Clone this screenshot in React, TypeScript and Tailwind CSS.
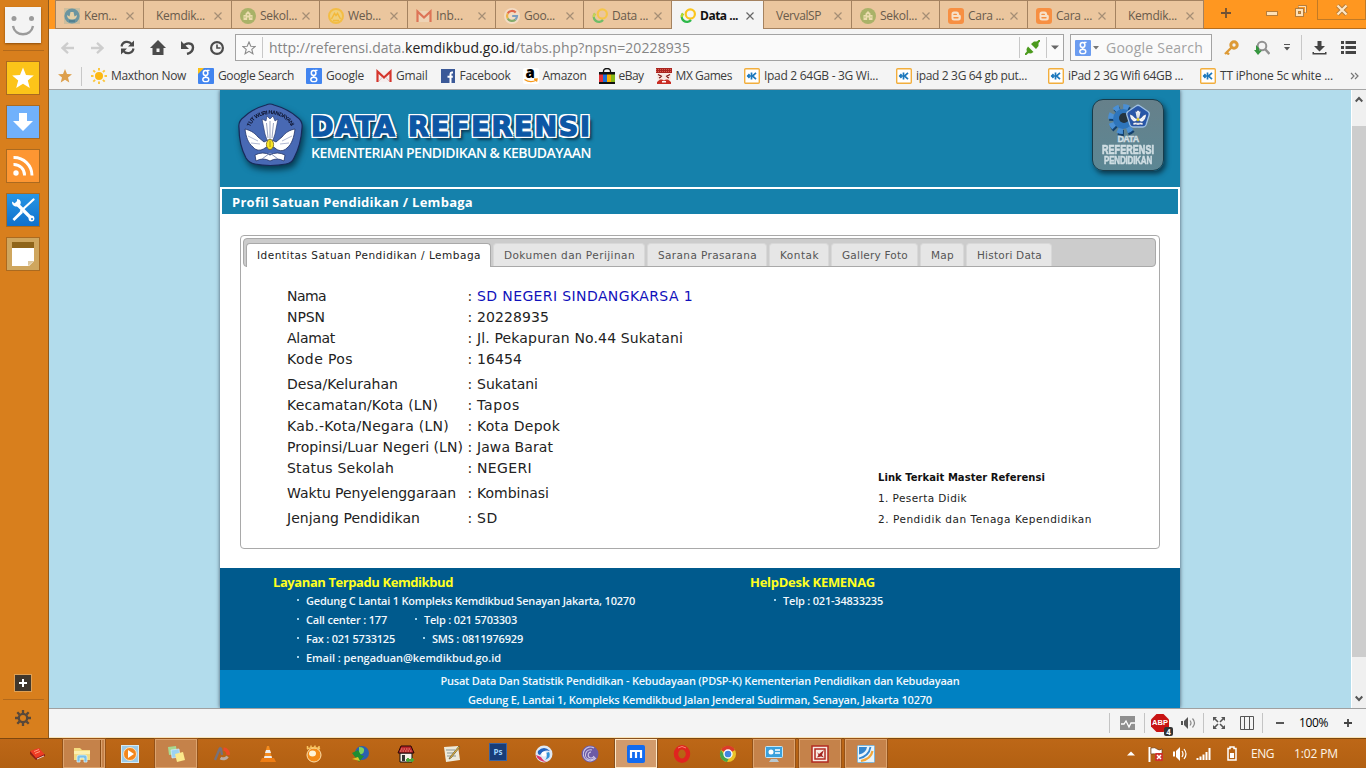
import React, { useLayoutEffect, useRef } from "react";

const UI = "font-['Open_Sans','Noto_Sans',sans-serif]";
const VERDANA = "font-['DejaVu_Sans',sans-serif]";

/* Single-line label whose letter spacing is adjusted so it spans w pixels. */
function Fit({ w, className = "", children }: { w: number; className?: string; children: string }) {
  const ref = useRef<HTMLSpanElement>(null);
  useLayoutEffect(() => {
    const el = ref.current;
    if (!el) return;
    el.style.letterSpacing = "0px";
    const natural = el.getBoundingClientRect().width;
    el.style.letterSpacing = `${(w - natural) / children.length}px`;
  }, [w, children]);
  return (
    <span ref={ref} className={`inline-block shrink-0 whitespace-pre ${className}`}>
      {children}
    </span>
  );
}

/* ---------- small icons ---------- */
const S = "block shrink-0";

const CrestTiny = () => (
  <svg className={S} width="16" height="16" viewBox="0 0 16 16">
    <rect width="16" height="16" fill="#cdbd9c" />
    <circle cx="8" cy="8" r="7.6" fill="#6b95a0" />
    <path d="M3 7c0 3 2 4.500 5 4.500S13 10 13 7l-2.500 1.500L9.500 4h-3l-1 4.500z" fill="#e5cfa5" />
    <path d="M5 13h6" stroke="#3f6f80" />
  </svg>
);
const School = () => (
  <svg className={S} width="16" height="16" viewBox="0 0 16 16">
    <circle cx="8" cy="8" r="8" fill="#a9b268" />
    <path d="M8 3L5.500 5.500v1.500h-2V12h9V7h-2V5.500z" fill="#ecdcae" />
    <path d="M7.200 9.500h1.600V12H7.200zM4.500 8.500h1v1.200h-1zM10.500 8.500h1v1.200h-1zM7.300 6h1.400v1.400H7.300z" fill="#a9b268" />
  </svg>
);
const WebYellow = () => (
  <svg className={S} width="16" height="16" viewBox="0 0 16 16">
    <circle cx="8" cy="8" r="7" fill="#f0cf7c" stroke="#f3bd45" strokeWidth="2" />
    <path d="M3.500 11l3-5.500L8 7.500l1.500-2 3 5.500M5 12.500h6" stroke="#f3b93a" strokeWidth="1.500" fill="none" />
  </svg>
);
const Gmail = ({ pale = false }: { pale?: boolean }) => (
  <svg className={S} width="16" height="16" viewBox="0 0 16 16">
    <path d="M1 3h14v11H1z" fill={pale ? "#eed3b5" : "#f4eeee"} />
    <path d="M1.500 14V3.500L8 9.500l6.500-6V14" fill="none" stroke={pale ? "#dd7457" : "#d5352c"} strokeWidth="2.200" />
    {!pale && <path d="M3 13l3.500-4M13 13L9.500 9" stroke="#d9a8a6" strokeWidth=".7" />}
  </svg>
);
const GoogleG = () => (
  <svg className={S} width="16" height="16" viewBox="0 0 16 16">
    <circle cx="8" cy="8" r="8" fill="#f2dcc4" />
    <g fill="none" strokeWidth="2.200">
      <path d="M11.700 4.500A5 5 0 0 0 3.700 5.500" stroke="#e2674a" />
      <path d="M3.700 5.500a5 5 0 0 0 0 5" stroke="#edb447" />
      <path d="M3.700 10.500a5 5 0 0 0 7.700 1.100" stroke="#84ab6a" />
      <path d="M11.400 11.600A5 5 0 0 0 13 8H8.200" stroke="#7c9fc0" />
    </g>
  </svg>
);
const Rings = ({ pale = false }: { pale?: boolean }) => (
  <svg className={S} width="16" height="16" viewBox="0 0 16 16" opacity={pale ? 0.65 : 1}>
    <circle cx="10.300" cy="6" r="4.600" fill="none" stroke="#fbc51d" strokeWidth="2.200" />
    <path d="M3 5.500a5 5 0 1 0 8 6.500" fill="none" stroke="#2eb94a" strokeWidth="2.400" />
    <path d="M3 5.500a4 4 0 0 0-1 3.500" fill="none" stroke="#b6d92c" strokeWidth="2.400" />
  </svg>
);
const Blogger = () => (
  <svg className={S} width="16" height="16" viewBox="0 0 16 16">
    <rect width="16" height="16" rx="3" fill="#f78f42" />
    <path d="M6 3.500h2.500a2.500 2.500 0 0 1 2.500 2.500c0 1.300 1.800.7 1.800 2v2a2.500 2.500 0 0 1-2.500 2.500H6A2.500 2.500 0 0 1 3.500 10V6A2.500 2.500 0 0 1 6 3.500z" fill="#f7e0c8" />
    <path d="M6 6.400h2.300M6 9.700h4" stroke="#f78f42" strokeWidth="1.400" strokeLinecap="round" />
  </svg>
);
const Google8 = ({ corner = false, pale = false }: { corner?: boolean; pale?: boolean }) => (
  <svg className={S} width="16" height="16" viewBox="0 0 16 16">
    <rect width="16" height="16" rx="1" fill={pale ? "#6b9cf0" : "#4285f0"} />
    {corner && <path d="M0 0h6L0 6z" fill="#fbc116" />}
    <g fill="none" stroke="#fff">
      <ellipse cx="7.600" cy="4.900" rx="2.300" ry="2.500" strokeWidth="1.500" />
      <path d="M9 2.300h2.500M8.300 7.300q-1.700 1 .2 1.900" strokeWidth="1.200" />
      <ellipse cx="7.800" cy="11.400" rx="3" ry="2.200" strokeWidth="1.400" />
    </g>
  </svg>
);
const Sun = () => (
  <svg className={S} width="16" height="16" viewBox="0 0 16 16">
    <circle cx="8" cy="8" r="4" fill="#fcb813" />
    <g stroke="#fcc63a" strokeWidth="1.900">
      <path d="M8 0v2.500M8 13.500V16M0 8h2.500M13.500 8H16M2.300 2.300l1.800 1.800M11.900 11.900l1.800 1.800M2.300 13.700l1.800-1.800M11.900 4.100l1.800-1.800" />
    </g>
  </svg>
);
const Facebook = () => (
  <svg className={S} width="16" height="16" viewBox="0 0 16 16">
    <path d="M1 1h14v14H1z" fill="#3b5998" />
    <path d="M13 4.500h-1.200c-1 0-1.300.5-1.300 1.500v9M7.500 8.800h5.300" stroke="#fff" strokeWidth="2" fill="none" />
  </svg>
);
const Amazon = () => (
  <span className="relative block h-4 w-4 shrink-0 rounded-[2px] bg-white">
    <span className="absolute left-[3px] top-[-3px] font-['Open_Sans',sans-serif] text-[15px] font-extrabold leading-[15px] text-black">a</span>
    <svg className="absolute inset-0" width="16" height="16"><path d="M1.500 11.500q6 4 12 .5M11 11.300l3-.3-.5 2.700" stroke="#f79a1c" strokeWidth="1.400" fill="none" /></svg>
  </span>
);
const Ebay = () => (
  <svg className={S} width="16" height="16" viewBox="0 0 16 16">
    <path d="M0 4h16v12H0z" fill="#111" />
    <path d="M4.500 5V3.500a3.500 3 0 0 1 7 0V5" stroke="#111" strokeWidth="1.300" fill="none" />
    <path d="M0 6.500h4V14H0z" fill="#e53238" /><path d="M4 6.500h4V14H4z" fill="#1a6ed8" />
    <path d="M8 6.500h4V14H8z" fill="#f5af02" /><path d="M12 6.500h4V14h-4z" fill="#86b817" />
  </svg>
);
const MxGames = () => (
  <svg className={S} width="16" height="16" viewBox="0 0 16 16">
    <path d="M0 0h16v5H0z" fill="#a92520" />
    <path d="M0 1.500h16M0 3.500h16" stroke="#d95d50" strokeDasharray="1 1" />
    <path d="M1 5h14v6l-3 4H4l-3-4z" fill="#f8e8e2" />
    <path d="M2 6.500l4 2M14 6.500l-4 2M3 10l2-1M13 10l-2-1" stroke="#7c1512" strokeWidth="1.300" />
    <path d="M1 16v-2l3-2.500h2l2 1 2-1h2l3 2.500v2z" fill="#c92d24" /><path d="M6 13h4v1.500H6z" fill="#fff" />
  </svg>
);
const Kaskus = () => (
  <svg className={S} width="16" height="16" viewBox="0 0 16 16">
    <rect x=".7" y=".7" width="14.600" height="14.600" rx="1" fill="#fff" stroke="#f2ae3d" strokeWidth="1.400" />
    <path d="M3 8h5M7.500 4.500v7M12 4.800L8.500 8l3.500 3.200M5.500 6.200L3.800 8l1.700 1.800" stroke="#1c78bd" strokeWidth="1.700" fill="none" />
  </svg>
);
const Close = ({ dark = false }: { dark?: boolean }) => (
  <svg className={S} width="8" height="8" viewBox="0 0 8 8">
    <path d="M.5.5l7 7M7.500.5l-7 7" stroke={dark ? "#666" : "#a58e75"} strokeWidth="1.200" />
  </svg>
);

/* ---------- side bar ---------- */
function Side({ className, children }: { className: string; children: React.ReactNode }) {
  return (
    <div className={`mb-[10px] flex h-[34px] w-[34px] shrink-0 items-center justify-center border border-[#aa6a20] ${className}`}>
      {children}
    </div>
  );
}
function Sidebar() {
  return (
    <aside className="flex w-[49px] shrink-0 flex-col items-center border-r border-[#8f5a1d] bg-[#d87f1d] pr-[2px]">
      <div className="mt-[7px] flex h-9 w-9 shrink-0 items-center justify-center bg-[#f4f4f4] shadow-[0_1px_2px_#8a4b0a]">
        <svg width="36" height="36" viewBox="0 0 36 36">
          <circle cx="9" cy="11.500" r="2.500" fill="#9b9b9b" /><circle cx="26.500" cy="11.500" r="2.500" fill="#9b9b9b" />
          <path d="M8 19c2 11 18 11 20 0" fill="none" stroke="#9b9b9b" strokeWidth="2.400" />
        </svg>
      </div>
      <div className="mb-[10px] mt-[7px] h-px w-[41px] shrink-0 bg-[#b3691a]" />
      <Side className="bg-[#fcc419]">
        <svg width="24" height="22" viewBox="0 0 24 22"><path d="M12 .5l3 7.400 7.800.5-6 5 2 7.600L12 16.800 5.200 21l2-7.600-6-5 7.800-.5z" fill="#fff" /></svg>
      </Side>
      <Side className="bg-[#71b1fb]">
        <svg width="20" height="18" viewBox="0 0 20 18"><path d="M6 0h8v8h6L10 18 0 8h6z" fill="#fff" /></svg>
      </Side>
      <Side className="bg-[#fd9632]">
        <svg width="21" height="20" viewBox="0 0 21 20">
          <circle cx="3" cy="17" r="2.700" fill="#fff" /><path d="M.5 8.500A10.500 10.500 0 0 1 11.500 19.500M.5 1.500A18 18 0 0 1 19 19.500" stroke="#fff" strokeWidth="2.900" fill="none" />
        </svg>
      </Side>
      <Side className="bg-gradient-to-b from-[#2796e6] to-[#0f70cb]">
        <svg width="24" height="24" viewBox="0 0 24 24">
          <path d="M22.500 1.500L10 13" stroke="#fff" strokeWidth="2.200" strokeLinecap="round" />
          <path d="M10 12.500l-8.500 8.500 1.800 2 8.700-8.300z" fill="#fff" />
          <path d="M4.500 4.500l15 15" stroke="#fff" strokeWidth="3.200" />
          <path d="M1 3.500l3 2 2-1.500V1c3 0 5 3 3 6-2 2-5 2-7 0-1-1-1-2.500-1-3.500z" fill="#fff" />
          <circle cx="20.500" cy="20.500" r="2.900" fill="#fff" /><circle cx="21" cy="21" r="1" fill="#187bd2" />
        </svg>
      </Side>
      <Side className="bg-[#cfa65e]">
        <svg width="22" height="24" viewBox="0 0 22 24"><path d="M0 6h22v13l-5 5H0z" fill="#fff" /><path d="M0 0h22v6H0z" fill="#8f651b" /><path d="M16 24v-5h6z" fill="#dcc79e" /></svg>
      </Side>
      <div className="grow" />
      <svg className={S} width="18" height="18" viewBox="0 0 18 18">
        <rect x=".5" y=".5" width="17" height="17" fill="#40372c" stroke="#dea055" /><path d="M5 9h8M9 5v8" stroke="#fff" strokeWidth="2" />
      </svg>
      <div className="mb-[9px] mt-[7px] h-px w-[41px] shrink-0 bg-[#b3691a]" />
      <svg className={`${S} mb-[11px]`} width="18" height="18" viewBox="0 0 18 18">
        <g stroke="#58483a" strokeWidth="2.300"><path d="M9 1v3M9 14v3M1 9h3M14 9h3M3.300 3.300l2.100 2.100M12.600 12.600l2.100 2.100M3.300 14.700l2.100-2.100M12.600 5.400l2.100-2.100" /></g>
        <circle cx="9" cy="9" r="4.200" fill="none" stroke="#58483a" strokeWidth="2.300" />
      </svg>
    </aside>
  );
}

/* ---------- tabs ---------- */
type TabInfo = { t: string; w: number; icon?: React.ReactNode; active?: boolean };
const tabs: TabInfo[] = [
  { t: "Kem...", w: 33, icon: <CrestTiny /> },
  { t: "Kemdik...", w: 49 },
  { t: "Sekol...", w: 37, icon: <School /> },
  { t: "Web...", w: 33, icon: <WebYellow /> },
  { t: "Inb...", w: 27, icon: <Gmail pale /> },
  { t: "Goo...", w: 31, icon: <GoogleG /> },
  { t: "Data ...", w: 36, icon: <Rings pale /> },
  { t: "Data ...", w: 38, icon: <Rings />, active: true },
  { t: "VervalSP", w: 45 },
  { t: "Sekol...", w: 37, icon: <School /> },
  { t: "Cara ...", w: 36, icon: <Blogger /> },
  { t: "Cara ...", w: 36, icon: <Blogger /> },
  { t: "Kemdik...", w: 49 },
];
function TabStrip() {
  return (
    <div className="flex h-[29px] shrink-0 bg-[#ff9720] pl-[6px]">
      {tabs.map((t, i) => (
        <div
          key={i}
          className={`flex h-[29px] shrink-0 items-center border-l border-t border-l-[#a48260] border-t-[#a48260] pb-px pr-[9px] pt-[3px] text-[12px] ${
            t.active ? "w-[92px] bg-[#f4f4f4] font-bold text-[#111]" : "w-[88px] border-b border-b-[#a48260] bg-[#ebc69e] text-[#695b4c]"
          } ${t.icon ? "gap-1 pl-2" : "pl-3"}`}
        >
          {t.icon}
          <Fit w={t.w}>{t.t}</Fit>
          <span className="ml-auto"><Close dark={t.active} /></span>
        </div>
      ))}
      <div className="flex grow items-start border-b border-l border-b-[#b56c1b] border-l-[#a48260]">
        <svg className={`${S} ml-[16px] mt-[7px]`} width="12" height="12"><path d="M6 1v10M1 6h10" stroke="#705235" strokeWidth="1.800" /></svg>
        <svg className={`${S} ml-[34px] mt-[11px]`} width="12" height="5"><rect x=".5" y=".5" width="11" height="4" fill="#ffe1b6" stroke="#b57d3c" /></svg>
        <svg className={`${S} ml-[17px] mt-[5px]`} width="12" height="12" viewBox="0 0 12 12">
          <path d="M3.500 3V.5h8v7H9" fill="none" stroke="#b57d3c" /><path d="M3.500 1.500h7v6" fill="none" stroke="#ffe1b6" />
          <rect x=".5" y="3.500" width="8" height="8" fill="#ffe1b6" stroke="#b57d3c" /><rect x="3.500" y="6.500" width="2" height="2" fill="#ff9720" stroke="#b57d3c" />
        </svg>
        <div className="ml-[10px] flex h-5 w-[49px] items-center justify-center border border-t-0 border-[#c27a25]">
          <svg width="12" height="12"><path d="M1.500 1.500l9 9M10.500 1.500l-9 9" stroke="#b57d3c" strokeWidth="4" /><path d="M1.500 1.500l9 9M10.500 1.500l-9 9" stroke="#ffe6c2" strokeWidth="2.200" /></svg>
        </div>
      </div>
    </div>
  );
}

/* ---------- toolbar ---------- */
const Caret = ({ className = "" }: { className?: string }) => (
  <svg className={`${S} ${className}`} width="8" height="5"><path d="M0 .5h8L4 4.500z" fill="#666" /></svg>
);
function Toolbar() {
  return (
    <div className="flex h-[34px] shrink-0 items-center bg-[#f4f4f4] pt-[3px]">
      <div className="flex h-[26px] w-[186px] shrink-0 items-center pl-[12px]">
        <svg className={S} width="13" height="12" viewBox="0 0 13 12"><path d="M7 .8L1.500 6 7 11.200M1.500 6H13" stroke="#cdcdcd" strokeWidth="2.300" fill="none" /></svg>
        <svg className={`${S} ml-[17px]`} width="13" height="12" viewBox="0 0 13 12"><path d="M6 .8L11.500 6 6 11.200M11.500 6H0" stroke="#cdcdcd" strokeWidth="2.300" fill="none" /></svg>
        <svg className={`${S} ml-[16px]`} width="15" height="15" viewBox="0 0 15 15"><path d="M1.500 6.500C2.500 1 9 .5 12 4.500M13.500 8.500C12.500 14 6 14.500 3 10.500" stroke="#4b4b4b" strokeWidth="2.200" fill="none" /><path d="M14 .5v6H8zM1 14.500v-6h6z" fill="#4b4b4b" /></svg>
        <svg className={`${S} ml-[15px]`} width="16" height="15" viewBox="0 0 16 15"><path d="M8 0l8 8h-2.500v7h-11V8H0zM6.500 8.500V12h3V8.500z" fill="#4b4b4b" fillRule="evenodd" /></svg>
        <svg className={`${S} ml-[14px]`} width="15" height="14" viewBox="0 0 15 14"><path d="M3 5.500C6 1 13 1.500 13 6.500c0 3.500-2.500 5.500-6 6.500" stroke="#4b4b4b" strokeWidth="2.400" fill="none" /><path d="M1 0v8h8z" fill="#4b4b4b" /></svg>
        <svg className={`${S} ml-[15px]`} width="14" height="14" viewBox="0 0 14 14"><circle cx="7" cy="7" r="5.900" stroke="#4b4b4b" strokeWidth="2.200" fill="none" /><path d="M7 3.500V7h3.500" stroke="#4b4b4b" strokeWidth="1.600" fill="none" /></svg>
      </div>
      <div className="flex h-[27px] w-[829px] shrink-0 items-center border border-[#a3a3a3] bg-[#fafafa]">
        <svg className={`${S} ml-[6px]`} width="14" height="14" viewBox="0 0 14 14"><path d="M7 1l1.800 4.200 4.400.3-3.400 2.900 1.100 4.300L7 10.300l-3.900 2.400 1.100-4.300L.8 5.500l4.400-.3z" stroke="#8a8a8a" strokeWidth="1.100" fill="none" /></svg>
        <div className="ml-[6px] h-[21px] w-px bg-[#c8c8c8]" />
        <div className="flex grow pl-[6px] text-[14px] text-[#858585]">
          <Fit w={136}>http://referensi.data.</Fit>
          <Fit w={110} className="text-[#222]">kemdikbud.go.id</Fit>
          <Fit w={175}>/tabs.php?npsn=20228935</Fit>
        </div>
        <div className="h-[21px] w-px bg-[#c8c8c8]" />
        <svg className={`${S} ml-[5px]`} width="15" height="15" viewBox="0 0 15 15"><path d="M0 15l4-4M11 4l4-4" stroke="#4b9a1d" strokeWidth="2" /><path d="M3 6.500l5.500 5.500-2.500 1.500L2 13 1.500 9zM6 4l3-2.500h3.500L13.500 3v3L11 9z" fill="#4b9a1d" /></svg>
        <div className="ml-[6px] h-[21px] w-px bg-[#c8c8c8]" />
        <Caret className="ml-[4px] mr-[4px]" />
      </div>
      <div className="ml-[6px] flex h-[27px] w-[142px] shrink-0 items-center border border-[#a3a3a3] bg-[#fafafa] pl-[4px]">
        <Google8 pale />
        <svg className={`${S} ml-[2px]`} width="6" height="4"><path d="M0 0h6L3 3.500z" fill="#777" /></svg>
        <Fit w={97} className="ml-[7px] text-[14px] text-[#a2a2a2]">Google Search</Fit>
      </div>
      <svg className={`${S} ml-[12px]`} width="15" height="15" viewBox="0 0 15 15"><circle cx="10" cy="5" r="3.200" stroke="#dd9a36" strokeWidth="3" fill="none" /><path d="M7.500 7.500L1 14M2 11.500l3 3" stroke="#dd9a36" strokeWidth="2.400" /></svg>
      <svg className={`${S} ml-[15px]`} width="16" height="16" viewBox="0 0 16 16"><circle cx="8" cy="6" r="4.300" stroke="#929292" strokeWidth="2" fill="none" /><path d="M11 9l4.500 5" stroke="#929292" strokeWidth="2.500" /><path d="M2 5v5H0l4 5 4-4.500H5V8" fill="#36963f" /></svg>
      <svg className={`${S} ml-[13px]`} width="8" height="7"><path d="M1 .5h6" stroke="#555" /><path d="M1 3h6L4 6.500z" fill="#555" /></svg>
      <div className="ml-[10px] h-[25px] w-px bg-[#c8c8c8]" />
      <svg className={`${S} ml-[10px]`} width="15" height="14" viewBox="0 0 15 14"><path d="M5.500 0h4v5h3.500L7.500 10.500 2 5h3.500zM.5 11v2.500h14V11h-1.500v1h-11v-1z" fill="#444" /></svg>
      <svg className={`${S} ml-[14px]`} width="15" height="13" viewBox="0 0 15 13"><path d="M0 1.500h3M4.500 1.500H15M0 6.500h3M4.500 6.500H15M0 11.500h3M4.500 11.500H15" stroke="#444" strokeWidth="3" /></svg>
    </div>
  );
}

const marks = [
  { t: "Maxthon Now", w: 75, icon: <Sun /> },
  { t: "Google Search", w: 76, icon: <Google8 corner /> },
  { t: "Google", w: 38, icon: <Google8 /> },
  { t: "Gmail", w: 31.5, icon: <Gmail /> },
  { t: "Facebook", w: 51, icon: <Facebook /> },
  { t: "Amazon", w: 44, icon: <Amazon /> },
  { t: "eBay", w: 25, icon: <Ebay /> },
  { t: "MX Games", w: 56.5, icon: <MxGames /> },
];
const adMarks = [
  { t: "Ipad 2 64GB - 3G Wi...", w: 114 },
  { t: "ipad 2 3G 64 gb put...", w: 111 },
  { t: "iPad 2 3G Wifi 64GB ...", w: 115 },
  { t: "TT iPhone 5c white ...", w: 113 },
];
function Bookmarks() {
  return (
    <div className="flex h-[27px] shrink-0 items-center border-b border-[#a5a5a5] bg-[#f4f4f4] pl-[9px] text-[12px] text-[#3c3c3c]">
      <svg className={S} width="14" height="14" viewBox="0 0 14 14"><path d="M7 0l2 5 5 .3-4 3.300 1.300 5L7 10.800 2.700 13.600l1.300-5-4-3.300L5 5z" fill="#dd9f4b" /></svg>
      <div className="ml-[9px] mr-[9px] h-[19px] w-px bg-[#c8c8c8]" />
      <div className="flex gap-3">
        {marks.map((m) => (
          <div key={m.t} className="flex shrink-0 items-center gap-1">{m.icon}<Fit w={m.w}>{m.t}</Fit></div>
        ))}
        {adMarks.map((m) => (
          <div key={m.t} className="flex w-[140px] shrink-0 items-center gap-1"><Kaskus /><Fit w={m.w}>{m.t}</Fit></div>
        ))}
      </div>
      <svg className={`${S} ml-[10px]`} width="9" height="8"><path d="M1 1l3 3-3 3M5 1l3 3-3 3" stroke="#777" strokeWidth="1.200" fill="none" /></svg>
    </div>
  );
}

/* ---------- web page ---------- */
function Wings() {
  return (
    <g>
      <path d="M7 26c4 1 9 3 13 8l6 5 6-3 6 3 6-5c4-5 8-7 13-8-1 8-3 15-8 19-4 4-9 3-12 0l-5-3-5 3c-4 3-9 3-12-1-5-4-7-10-8-18z" fill="#fff" stroke="#223468" strokeWidth=".8" />
      <path d="M10 33l10 5M13 40l9 1M54 33l-10 5M51 40l-9 1" stroke="#9ca6c6" strokeWidth=".8" />
      <path d="M27 31L24 16l4 2 1-5 3 3 3-3 2 5 3-2-3 15-2 6h-6z" fill="#fff" stroke="#223468" strokeWidth=".6" />
      <path d="M32 18v20M28.500 20l1.500 15M35.500 20L34 35" stroke="#8e9ab8" strokeWidth=".9" />
      <ellipse cx="32" cy="41.500" rx="3.600" ry="5" fill="#f7e426" stroke="#72631a" strokeWidth=".8" />
      <path d="M32 38v6" stroke="#a18b13" strokeWidth=".9" />
      <path d="M17 52q8-4 15 0 7-4 15 0l-1 6q-7-4-14 0-7-4-14 0z" fill="#fff" stroke="#223468" strokeWidth=".8" />
      <path d="M24 56l8-6 8 6" fill="none" stroke="#8894b8" />
    </g>
  );
}
function Crest() {
  return (
    <svg className={`${S} overflow-visible drop-shadow-[2px_4px_3px_#06394f]`} width="66" height="66" viewBox="0 0 66 66">
      <path d="M28 2Q32 0 36 2Q50 6 59 14Q65 18 64 25Q63 42 56 55Q54 60 48 61Q32 64 17 61Q11 60 8 55Q1 42 1 25Q0 18 6 14Q14 6 28 2z" fill="#4869b4" stroke="#182a59" strokeWidth="1.200" />
      <path id="crest-arc" d="M12 24Q17 12 32 11Q48 12 54 25" fill="none" />
      <text className="fill-[#0b1029] font-['Liberation_Sans',sans-serif] text-[5.500px] font-bold"><textPath href="#crest-arc" textLength="51">TUT WURI HANDAYANI</textPath></text>
      <Wings />
    </svg>
  );
}
function Badge() {
  return (
    <div className="mt-[9px] flex h-[72px] w-[72px] flex-col items-center rounded-[11px] border border-[#173c4b] bg-gradient-to-b from-[#66808a] to-[#5c8794] pt-[3px] font-['Liberation_Sans_Narrow','Liberation_Sans',sans-serif] font-bold text-[#d0dee3] shadow-[2px_3px_5px_#0b3b50]">
      <svg className={`${S} overflow-visible`} width="48" height="32" viewBox="0 0 48 32">
        <circle cx="19" cy="16" r="12" fill="none" stroke="#123f6c" strokeWidth="6" strokeDasharray="5.400 4" transform="translate(1 2)" />
        <circle cx="19" cy="16" r="12" fill="none" stroke="#4a8fd4" strokeWidth="6" strokeDasharray="5.400 4" />
        <circle cx="19" cy="16" r="10" fill="#2e75bc" />
        <circle cx="20" cy="15" r="5" fill="#24343f" />
        <path d="M32 3q2-1.500 4 0l8 5.500q2 1.500 1 4l-3 9.500q-1 2-3 2H29q-2 0-3-2l-3-9.500q-1-2.500 1-4z" fill="#2856a8" stroke="#9fc0e2" strokeWidth="1.300" />
        <svg x="23.500" y="3" width="21" height="21" viewBox="0 0 64 64"><Wings /></svg>
      </svg>
      <Fit w={21} className="-mt-[1px] [-webkit-text-stroke:0.4px_#d0dee3] text-[9px] leading-[10px]">DATA</Fit>
      <Fit w={52} className="scale-y-[1.4] [-webkit-text-stroke:0.500px_#d0dee3] text-[9px] leading-[12px]">REFERENSI</Fit>
      <Fit w={48} className="scale-y-125 [-webkit-text-stroke:0.400px_#d0dee3] text-[8px] leading-[10px]">PENDIDIKAN</Fit>
    </div>
  );
}

const pageTabs = [
  { t: "Identitas Satuan Pendidikan / Lembaga", w: 224, active: true },
  { t: "Dokumen dan Perijinan", w: 131 },
  { t: "Sarana Prasarana", w: 99 },
  { t: "Kontak", w: 39 },
  { t: "Gallery Foto", w: 66 },
  { t: "Map", w: 23 },
  { t: "Histori Data", w: 65 },
];
const rows = [
  { k: "Nama", kw: 39, v: "SD NEGERI SINDANGKARSA 1", vw: 216, link: true },
  { k: "NPSN", kw: 38, v: "20228935", vw: 72 },
  { k: "Alamat", kw: 48, v: "Jl. Pekapuran No.44 Sukatani", vw: 206 },
  { k: "Kode Pos", kw: 66, v: "16454", vw: 45, gap: true },
  { k: "Desa/Kelurahan", kw: 111, v: "Sukatani", vw: 61 },
  { k: "Kecamatan/Kota (LN)", kw: 151, v: "Tapos", vw: 43 },
  { k: "Kab.-Kota/Negara (LN)", kw: 162, v: "Kota Depok", vw: 83 },
  { k: "Propinsi/Luar Negeri (LN)", kw: 176, v: "Jawa Barat", vw: 76 },
  { k: "Status Sekolah", kw: 107, v: "NEGERI", vw: 55, gap: true },
  { k: "Waktu Penyelenggaraan", kw: 169, v: "Kombinasi", vw: 72, gap: true },
  { k: "Jenjang Pendidikan", kw: 133, v: "SD", vw: 21 },
];

function Profile() {
  return (
    <div className={`mx-5 mt-[21px] h-[314px] shrink-0 rounded-[4px] border border-[#a9a9a9] p-[2px] ${VERDANA}`}>
      <div className="mr-px flex h-[29px] items-end gap-[2px] rounded-[4px] border border-[#a9a9a9] bg-[#ccc] pl-[2px] text-[10.500px]">
        {pageTabs.map((t) =>
          t.active ? (
            <div key={t.t} className="-mb-px flex h-[24px] items-center rounded-t-[4px] border border-b-0 border-[#a9a9a9] bg-white pl-[10px] pr-[9px] text-[#222]"><Fit w={t.w}>{t.t}</Fit></div>
          ) : (
            <div key={t.t} className="flex h-[23px] items-center rounded-t-[4px] border border-b-0 border-[#d8d8d8] bg-[#e6e6e6] pl-[10px] pr-[9px] pt-[2px] text-[#555]"><Fit w={t.w}>{t.t}</Fit></div>
          )
        )}
      </div>
      <div className="flex justify-between pl-[44px] pr-[65px] pt-[19px] text-[#222]">
        <div className="text-[14px] leading-[21px]">
          {rows.map((r) => (
            <div key={r.k} className={`flex h-[21px] ${r.gap ? "mb-1" : ""}`}>
              <div className="w-[180.5px] shrink-0"><Fit w={r.kw}>{r.k}</Fit></div>
              <div className="w-[9.5px] shrink-0">:</div>
              <Fit w={r.vw} className={r.link ? "text-[#1111bb]" : ""}>{r.v}</Fit>
            </div>
          ))}
        </div>
        <div className="flex w-[214px] flex-col items-start pt-[181px] text-[10.500px] leading-[21px]">
          <Fit w={167} className="text-[10px] font-bold text-[#111]">Link Terkait Master Referensi</Fit>
          <Fit w={89}>1. Peserta Didik</Fit>
          <Fit w={214}>2. Pendidik dan Tenaga Kependidikan</Fit>
        </div>
      </div>
    </div>
  );
}

function Item({ w, children, className = "" }: { w: number; children: string; className?: string }) {
  return (
    <div className={`flex items-center gap-[7px] ${className}`}>
      <span className="mb-[2px] h-[2px] w-[2px] shrink-0 bg-[#a3d2ea]" />
      <Fit w={w}>{children}</Fit>
    </div>
  );
}
function Footer() {
  return (
    <footer className="mt-auto shrink-0 text-[11px] font-semibold text-[#f2f8fc]">
      <div className="flex h-[102px] bg-[#005a8d] pl-[53px] pt-[5px] leading-[19px]">
        <div className="w-[477px]">
          <Fit w={180} className="h-[18px] text-[13px] font-bold text-[#ffff1e]">Layanan Terpadu Kemdikbud</Fit>
          <div className="-mt-[1px] pl-6">
            <Item w={329}>Gedung C Lantai 1 Kompleks Kemdikbud Senayan Jakarta, 10270</Item>
            <div className="flex"><Item w={81} className="w-[118px]">Call center : 177</Item><Item w={93}>Telp : 021 5703303</Item></div>
            <div className="flex"><Item w={89} className="w-[126px]">Fax : 021 5733125</Item><Item w={91}>SMS : 0811976929</Item></div>
            <Item w={195}>Email : pengaduan@kemdikbud.go.id</Item>
          </div>
        </div>
        <div>
          <Fit w={125} className="h-[18px] text-[13px] font-bold text-[#ffff1e]">HelpDesk KEMENAG</Fit>
          <div className="-mt-[1px] pl-6"><Item w={100}>Telp : 021-34833235</Item></div>
        </div>
      </div>
      <div className="flex h-[38px] flex-col items-center bg-[#0081c2] pt-px leading-[19px]">
        <Fit w={519}>Pusat Data Dan Statistik Pendidikan - Kebudayaan (PDSP-K) Kementerian Pendidikan dan Kebudayaan</Fit>
        <Fit w={464}>Gedung E, Lantai 1, Kompleks Kemdikbud Jalan Jenderal Sudirman, Senayan, Jakarta 10270</Fit>
      </div>
    </footer>
  );
}

function Page() {
  return (
    <div className="flex h-[618px] shrink-0 overflow-hidden bg-[#b2dcec]">
      <div className="flex grow justify-center">
        <div className="flex w-[960px] flex-col bg-white shadow-[0_0_4px_#456]">
          <header className="flex h-[97px] shrink-0 items-start bg-[#1581ab] pl-[18px] pr-[16px]">
            <div className="mt-[13px]"><Crest /></div>
            <div className="ml-[7px] flex grow flex-col items-start pt-[19px]">
              <Fit w={281} className="font-['DejaVu_Sans',sans-serif] text-[27px] font-bold leading-[35px] text-[#0c57a5] [-webkit-text-stroke:1.300px_#0c57a5] [text-shadow:2px_0_#fff,-2px_0_#fff,0_2px_#fff,0_-2px_#fff,2px_2px_#fff,-2px_-2px_#fff,2px_-2px_#fff,-2px_2px_#fff,4px_4px_3px_#0b3a54]">DATA REFERENSI</Fit>
              <Fit w={280} className="text-[14px] font-semibold leading-[18px] text-white">KEMENTERIAN PENDIDIKAN &amp; KEBUDAYAAN</Fit>
            </div>
            <Badge />
          </header>
          <div className="mx-[2px] mt-[2px] flex h-[25px] shrink-0 items-center bg-[#1581ab] pl-[10px] pt-[2px] text-[13px] font-bold text-white">
            <Fit w={241}>Profil Satuan Pendidikan / Lembaga</Fit>
          </div>
          <Profile />
          <Footer />
        </div>
      </div>
      <div className="flex w-[15px] shrink-0 flex-col items-center border-l border-white bg-[#f0f0f0]">
        <svg className={`${S} my-[6px]`} width="8" height="7"><path d="M.7 5.500L4 2l3.300 3.500" stroke="#555" strokeWidth="2" fill="none" /></svg>
        <div className="mb-[51px] mt-[17px] w-full grow bg-[#cdcdcd]" />
        <svg className={`${S} mb-[6px] -mt-[13px]`} width="8" height="7"><path d="M.7 1.500L4 5l3.300-3.500" stroke="#555" strokeWidth="2" fill="none" /></svg>
      </div>
    </div>
  );
}

/* ---------- status bar ---------- */
const Cell = ({ className, children }: { className: string; children: React.ReactNode }) => (
  <div className={`flex h-5 shrink-0 items-center border-l border-[#c4c4c4] ${className}`}>{children}</div>
);
function StatusBar() {
  return (
    <div className="flex min-h-0 grow items-center justify-end border-b border-t border-b-[#fbe3b4] border-t-[#a0a0a0] bg-[#f4f4f4] text-[12px] text-[#222]">
      <Cell className="w-[35px] pl-[10px]">
        <svg width="16" height="15"><path d="M0 0h15v14H0z" fill="#8f8f8f" /><path d="M1 8h3l2-3 3 6 2-4h4" stroke="#fff" strokeWidth="1.300" fill="none" /></svg>
      </Cell>
      <Cell className="w-[59px] pl-[6px]">
        <div className="relative flex h-[18px] w-[18px] items-center justify-center">
          <svg className="absolute inset-0" width="18" height="18"><path d="M5.500 0h7L18 5.500v7L12.500 18h-7L0 12.500v-7z" fill="#c81414" /></svg>
          <span className="relative font-['Liberation_Sans',sans-serif] text-[7.500px] font-bold text-white">ABP</span>
          <span className="absolute -bottom-[4px] -right-[4px] flex h-[9px] w-[9px] items-center justify-center rounded-[2px] bg-[#333] text-[8px] font-bold leading-none text-white">4</span>
        </div>
        <svg className={`${S} ml-[12px]`} width="15" height="14" viewBox="0 0 15 14"><path d="M0 5h2v4H0zM3 5l4-4v12L3 9z" fill="#555" /><path d="M9 4.500q2 2.500 0 5M11.500 2.500q4 4.500 0 9" stroke="#888" strokeWidth="1.200" fill="none" /></svg>
      </Cell>
      <Cell className="w-[59px] pl-[9px]">
        <svg className={S} width="12" height="12" viewBox="0 0 12 12"><path d="M0 0h4L0 4zM12 0v4L8 0zM0 12V8l4 4zM12 12H8l4-4z" fill="#555" /><path d="M1 1l4 4M11 1L7 5M1 11l4-4M11 11L7 7" stroke="#555" strokeWidth="1.600" /></svg>
        <svg className={`${S} ml-[15px]`} width="14" height="14"><path d="M.5.5h13v13H.500zM4.500.5v13M9.500.5v13" stroke="#555" fill="none" /></svg>
      </Cell>
      <Cell className="w-[104px] pl-[13px]">
        <svg className={S} width="8" height="8"><path d="M0 4h8" stroke="#444" strokeWidth="1.800" /></svg>
        <Fit w={29} className="ml-[15px] text-black">100%</Fit>
        <svg className={`${S} ml-[16px]`} width="8" height="8"><path d="M0 4h8M4 0v8" stroke="#444" strokeWidth="1.800" /></svg>
      </Cell>
    </div>
  );
}

/* ---------- taskbar ---------- */
const T = ({ children }: { children: React.ReactNode }) => <svg className={S} width="18" height="18" viewBox="0 0 18 18">{children}</svg>;
const apps: { icon: React.ReactNode; box?: "open" | "active" | "stack" }[] = [
  { icon: <T><path d="M1 6l9-3 6 7-9 4z" fill="#ef3b24" /><path d="M1 6v3l6 6v-2zM7 15l9-4v-2l-9 4z" fill="#8d2014" /><path d="M8 13.500l7-3v1l-7 3z" fill="#f2d8c8" /><path d="M5 6.500l5-2M6 8.500l5-2" stroke="#ff9c7a" /></T> },
  { box: "stack", icon: <T><path d="M1 3h6l2 2h8v10H1z" fill="#f5dc82" /><path d="M1 6h16v3H1z" fill="#fdf0b0" /><path d="M4 17v-5q0-2 2-2h6q2 0 2 2v5h-3v-4H7v4z" fill="#7bc1e6" stroke="#d9f0fa" strokeWidth=".8" /></T> },
  { icon: <T><rect x=".5" y=".5" width="17" height="17" fill="#9ccbe8" stroke="#d6ebf5" /><circle cx="9" cy="9" r="6.500" fill="#f3861b" stroke="#fbe2c1" /><path d="M7 5l6 4-6 4z" fill="#fff" /></T> },
  { box: "open", icon: <T><path d="M1 2l8-1 1 8-8 1z" fill="#a8d890" /><path d="M4 5l8-1 1 8-8 1z" fill="#9cd2f0" stroke="#d8edf9" strokeWidth=".7" /><path d="M8 9l8-2 2 8-8 2z" fill="#fbe98c" /></T> },
  { icon: <T><path d="M2 15L6.500 4q1-1.500 1.500 0l1 6" stroke="#77717a" strokeWidth="2.400" fill="none" /><path d="M10.500 4a5 5 0 0 1 4.500 6" stroke="#ee4a25" strokeWidth="3.600" fill="none" /><path d="M14.500 11.500a5 5 0 0 1-7 1.500" stroke="#b9aaa1" strokeWidth="3" fill="none" /></T> },
  { icon: <T><path d="M3 13h12l2 4H1z" fill="#ed7d15" /><path d="M8 1h2l3 12H5z" fill="#f58c1e" /><path d="M7 5h4l1 3H6zM5.500 11h7l.5 2H5z" fill="#eee" /></T> },
  { icon: <T><circle cx="9" cy="10" r="7" fill="#f48b18" stroke="#fbe0ae" /><ellipse cx="7.500" cy="8.500" rx="3.500" ry="3" fill="#fff4d8" /><path d="M2 4q7-3 13 0M2.500 1v3M6 .5v2M10 .5v2M14 1v3" stroke="#f9c562" strokeWidth="1.500" fill="none" /></T> },
  { icon: <T><circle cx="11" cy="8" r="7" fill="#2b60af" /><path d="M8 2q6 0 5 4t-5 3z" fill="#7ed05a" /><path d="M1 8l6-3 3 5 3 1-5 6-4-5z" fill="#1e8d32" /><path d="M1 14l8 2-2-4z" fill="#d9c52b" /></T> },
  { icon: <T><path d="M3 8h12v9H3z" fill="#f7eee8" stroke="#111" /><path d="M1 8l3-7h10l3 7z" fill="#b92428" stroke="#260606" /><path d="M4 4h10M3 6h12" stroke="#ee8b82" strokeDasharray="1.500 1" /><path d="M5 10h3v6H5z" fill="#333" /><path d="M9 15h8M11 13v4M15 13v4" stroke="#4aa53a" strokeWidth="2" /></T> },
  { icon: <T><path d="M1 2l14-1 2 14-14 2z" fill="#eeeada" /><path d="M3 5h9M4 8h8M4 11h9" stroke="#8a9795" /><path d="M16 1L7 12l-1 2 2-1 9-11z" fill="#f2bd35" stroke="#5e553b" strokeWidth=".7" /></T> },
  { icon: <span className="mb-[3px] flex h-4 w-4 items-center justify-center bg-[#183d78] text-[8px] font-bold text-[#9fd5fb] outline outline-[#3a63a1]">Ps</span> },
  { icon: <T><circle cx="9" cy="9" r="8.500" fill="#dfe8f4" /><path d="M3 6Q9 0 15 6 9 4 5 10 2 9 3 6z" fill="#2364c0" /><path d="M14 7q3 5-4 8 3-3 1-7z" fill="#3192d8" /><path d="M1 10q2 7 11 7-4-1-6-5z" fill="#dc356a" /><circle cx="9" cy="9" r="2.500" fill="#fff" /></T> },
  { icon: <T><circle cx="9" cy="9" r="8.500" fill="#6c5aa5" /><path d="M15 13A7 7 0 1 1 13 3M14 12a5 5 0 1 1-3-7M13 11a3 3 0 1 1-3-4" fill="none" stroke="#cdc7e6" strokeWidth="1.100" /></T> },
  { box: "active", icon: <T><rect width="18" height="18" rx="2" fill="#126bf0" /><path d="M4 13V6h10v7M9 6v7" stroke="#fff" strokeWidth="2.200" fill="none" /></T> },
  { icon: <T><ellipse cx="9" cy="9" rx="6" ry="6.700" fill="none" stroke="#e0241f" strokeWidth="4.400" /><path d="M5 3q4-3 8 0" stroke="#f78372" fill="none" /></T> },
  { icon: <T><circle cx="9" cy="9" r="8" fill="#eac326" /><path d="M9 9L2 5a8 8 0 0 1 14 0z" fill="#db3b2a" /><path d="M2 5a8 8 0 0 0 6 12l3-6H6z" fill="#48a548" /><circle cx="9" cy="9" r="4" fill="#4286df" stroke="#fff" strokeWidth="1.300" /></T> },
  { box: "open", icon: <T><rect x=".5" y="1.500" width="17" height="11" rx="1" fill="#3aa0dc" stroke="#c2e6f8" /><circle cx="6" cy="7" r="2.500" fill="#fff" /><path d="M10 5h5M10 8h5" stroke="#fff" strokeWidth="1.500" /><path d="M6 14h6l2 3H4z" fill="#b9c8d0" /></T> },
  { box: "open", icon: <T><rect x="1" y="1" width="16" height="16" fill="#f8eae3" stroke="#b22b22" strokeWidth="1.500" /><path d="M4 4h10v10H4z" stroke="#b22b22" strokeWidth="1.500" fill="none" /><path d="M6 7l2 2 5-4-2 5 2 2.500-3-1-4 1 1.500-2.500z" fill="#a42420" /></T> },
  { box: "open", icon: <T><rect x=".5" y=".5" width="17" height="17" rx="1" fill="#eaf4fa" stroke="#7bb5dc" /><path d="M2 2h8Q9 8 2 9.500z" fill="#3486ce" /><path d="M2 13.500Q12 11 13.500 2" stroke="#3486ce" strokeWidth="1.800" fill="none" /><path d="M4 16Q14 14 15.500 6" stroke="#f2a73b" strokeWidth="2.200" fill="none" /></T> },
];
function Taskbar() {
  return (
    <div className="flex h-[30px] shrink-0 border-t border-[#7d470f] bg-gradient-to-b from-[#bd6717] to-[#b26012] pl-[15px]">
      {apps.map((a, i) => (
        <div key={i} className="flex w-[46px] shrink-0 justify-center">
          <div
            className={`flex h-[29px] w-[42px] items-center justify-center ${
              a.box === "active"
                ? "border border-[#ffe8c7] bg-[#d29b6c] outline outline-[#87501f]"
                : a.box
                  ? "border border-[#dca36e] bg-[#c5824a] outline outline-[#955218]"
                  : ""
            } ${a.box === "stack" ? "pl-[9px]" : ""}`}
          >
            {a.icon}
            {a.box === "stack" && <div className="ml-[9px] h-full w-[5px] shrink-0 border-l border-[#8b4d17] shadow-[inset_1px_0_#dca36e]" />}
          </div>
        </div>
      ))}
      <div className="ml-auto flex items-center pr-[28px] text-[12px] text-[#fff5e7]">
        <svg className={`${S} mr-[13px]`} width="8" height="5"><path d="M0 4.500L4 .5l4 4z" fill="#fff" /></svg>
        <svg className={`${S} mr-[9px]`} width="16" height="16" viewBox="0 0 16 16"><path d="M1.500 1v15" stroke="#fff" strokeWidth="2" /><path d="M3 2q4-1 6 1t5 0v7q-3 1-5-1t-6-1z" fill="#fff" stroke="#5d3110" strokeWidth=".6" /><rect x="7" y="7" width="8" height="8" rx="1" fill="#cf322d" /><path d="M9 9l4 4M13 9l-4 4" stroke="#fff" strokeWidth="1.500" /></svg>
        <svg className={`${S} mr-[9px]`} width="14" height="14" viewBox="0 0 14 14"><path d="M0 4.500h2v5H0zM3 4l4-4v14l-4-4z" fill="#fff" /><path d="M9 4q2 3 0 6M11 2q4 5 0 10" stroke="#fff" strokeWidth="1.200" fill="none" /></svg>
        <svg className={`${S} mr-[15px]`} width="16" height="12"><path d="M1.500 10v2M4.500 8.500V12M7.500 6.500V12M10.500 4v8M13.500 0v12" stroke="#fff" strokeWidth="2" /></svg>
        <svg className={`${S} mr-[14px]`} width="10" height="15"><path d="M3 1h4v1.500h2V14H1V2.500h2z" fill="none" stroke="#fff" strokeWidth="1.500" /><path d="M3 7h4v5H3z" fill="#fff" /></svg>
        <Fit w={23} className="mr-[20px]">ENG</Fit>
        <Fit w={44}>1:02 PM</Fit>
      </div>
    </div>
  );
}

export default function App() {
  return (
    <div className={`flex h-[768px] w-[1366px] flex-col overflow-hidden bg-[#f4f4f4] ${UI}`}>
      <div className="flex min-h-0 grow">
        <Sidebar />
        <main className="flex min-w-0 grow flex-col">
          <TabStrip />
          <Toolbar />
          <Bookmarks />
          <Page />
          <StatusBar />
        </main>
      </div>
      <Taskbar />
    </div>
  );
}
